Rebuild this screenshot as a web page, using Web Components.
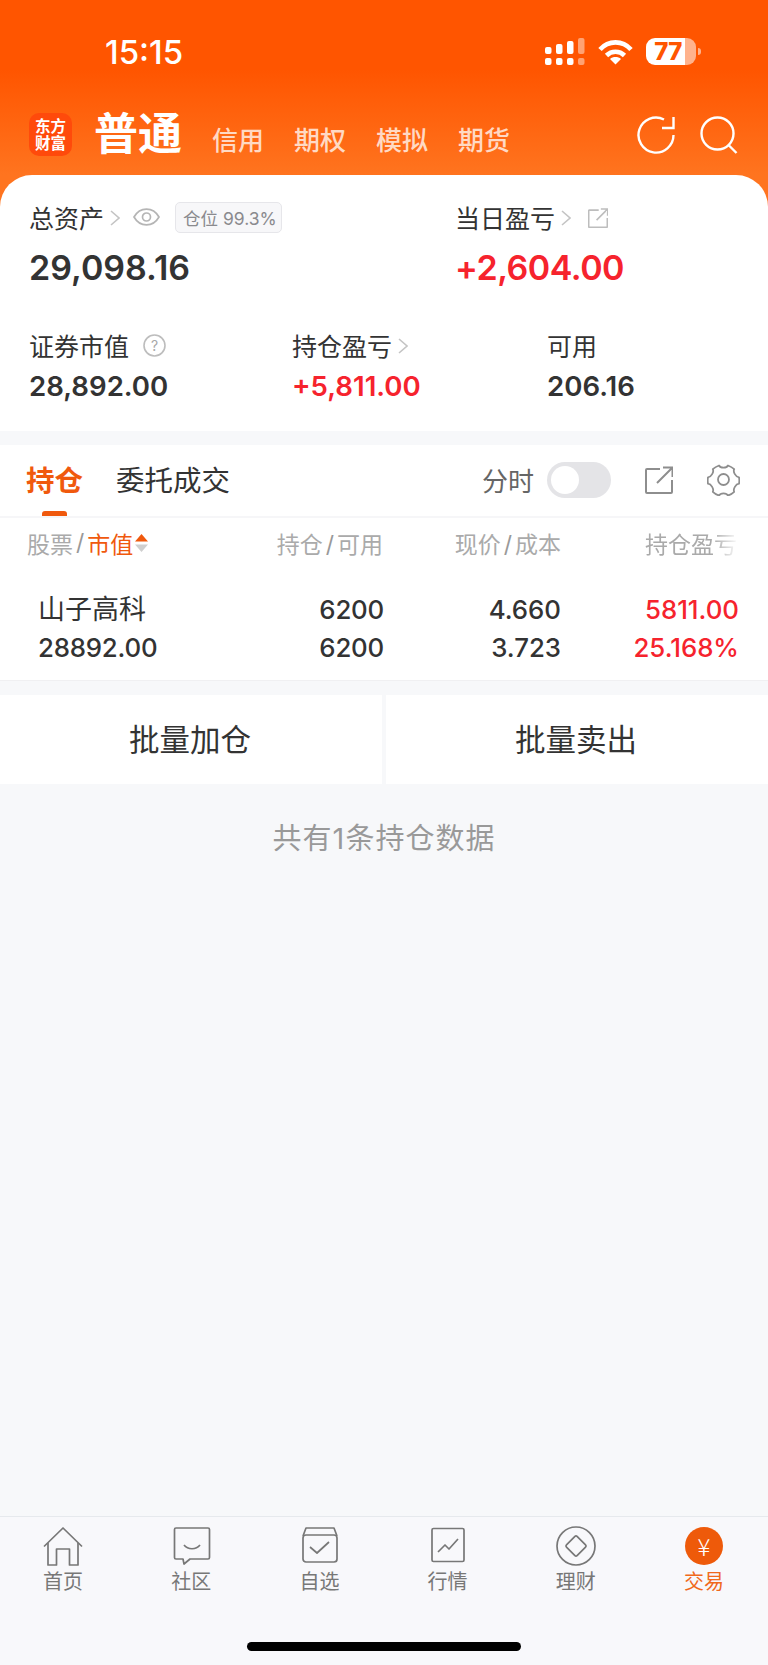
<!DOCTYPE html>
<html lang="zh">
<head>
<meta charset="utf-8">
<title>交易</title>
<style>
    html, body { margin: 0; padding: 0; }
    body {
        width: 768px;
        height: 1665px;
        overflow: hidden;
        display: flex;
        flex-direction: column;
        background: #f7f8fa;
        color: #333;
        font-family: Inter, "Noto Sans CJK SC", sans-serif;
    }
</style>
</head>
<body>
<app-header>
    <asset-card></asset-card>
</app-header>
<position-panel></position-panel>
<bottom-bar></bottom-bar>

<script>
// small shared icons
const CHEVRON = `<svg width="10" height="16" viewBox="0 0 10 16" fill="none" stroke="#c4c4c4" stroke-width="1.6"><path d="M1 1l8 7-8 7"/></svg>`;
const EXT_ICON = (size, color, sw) => `<svg width="${size}" height="${size}" viewBox="0 0 28 28" fill="none" stroke="${color}" stroke-width="${sw}"><path d="M15 3H2a1 1 0 0 0-1 1v22a1 1 0 0 0 1 1h24a1 1 0 0 0 1-1V14"/><path d="M12 17L27 2M18 1.500h9.500V11"/></svg>`;

class StatusBar extends HTMLElement {
    constructor() {
        super();
        this.attachShadow({ mode: 'open' }).innerHTML = `
            <style>
                :host { display: flex; align-items: center; justify-content: space-between; padding: 38px 67px 0 105px; height: 27px; }
                .time { font-size: 33px; font-weight: 500; color: #fff; line-height: 27px; position: relative; top: 1px; }
                .right { display: flex; align-items: center; }
                .wifi { margin-left: 13px; }
                .bat { display: flex; align-items: center; margin-left: 13px; }
                .cell { width: 50px; height: 27px; border-radius: 9px; background: linear-gradient(90deg, #fff 77%, rgba(255,255,255,.55) 77%); color: #ff5500; font-size: 24px; font-weight: 800; line-height: 27px; text-align: center; letter-spacing: -.5px; padding-right: 6px; box-sizing: border-box; }
                .nub { width: 3px; height: 7px; margin-left: 2px; background: rgba(255,255,255,.55); border-radius: 0 3px 3px 0; }
            </style>
            <span class="time">15:15</span>
            <div class="right">
                <svg width="40" height="27" viewBox="0 0 40 27" fill="#fff">
                    <rect x="0" y="20" width="6.500" height="7" rx="2"/><rect x="0" y="9" width="6.500" height="7" rx="2"/>
                    <rect x="11" y="20" width="6.500" height="7" rx="2"/><rect x="11" y="6" width="6.500" height="10" rx="2"/>
                    <rect x="22" y="20" width="6.500" height="7" rx="2"/><rect x="22" y="3" width="6.500" height="13" rx="2"/>
                    <g opacity=".45"><rect x="33" y="20" width="6.500" height="7" rx="2"/><rect x="33" y="0" width="6.500" height="16" rx="2"/></g>
                </svg>
                <svg class="wifi" width="35" height="26" viewBox="0 0 35 26" fill="none" stroke="#fff" stroke-width="4.600">
                    <path d="M2 10.500C10.500 1 24.500 1 33 10.500"/>
                    <path d="M8.500 16.500c5-5 13-5 18 0"/>
                    <path d="M17.500 25.500l-5.500-5.500c3-2.600 8-2.600 11 0z" fill="#fff" stroke="none"/>
                </svg>
                <div class="bat"><div class="cell">77</div><div class="nub"></div></div>
            </div>
        `;
    }
}

class TopNav extends HTMLElement {
    constructor() {
        super();
        const items = ['信用', '期权', '模拟', '期货'];
        this.attachShadow({ mode: 'open' }).innerHTML = `
            <style>
                :host { display: flex; align-items: flex-end; height: 43px; margin-top: 48px; padding: 0 30px 19px 29px; }
                .logo { width: 43px; height: 43px; border-radius: 10px; background: #ff4a0b; color: #fff; font: 700 15.500px/17px "Liberation Serif", "Noto Sans CJK SC", serif; display: flex; align-items: center; justify-content: center; text-align: center; }
                .main { margin-left: 22px; font-size: 44px; font-weight: 700; line-height: 43px; color: #fff; }
                .tabs { display: flex; gap: 30px; margin-left: 30px; }
                .tabs span { font-size: 26px; font-weight: 500; line-height: 30px; color: rgba(255,255,255,.76); display: block; }
                .icons { margin-left: auto; display: flex; gap: 25px; align-self: center; }
            </style>
            <div class="logo"><div>东方<br>财富</div></div>
            <div class="main">普通</div>
            <div class="tabs">${items.map((t) => `<span>${t}</span>`).join('')}</div>
            <div class="icons">
                <svg width="38" height="38" viewBox="0 0 38 38" fill="none" stroke="#fff" stroke-width="2.400">
                    <path d="M36.500 19A17.500 17.500 0 1 1 27 3.500"/>
                    <path d="M25 12h11.500V1"/>
                </svg>
                <svg width="38" height="38" viewBox="0 0 38 38" fill="none" stroke="#fff" stroke-width="2.400">
                    <circle cx="17.500" cy="17.500" r="16"/>
                    <path d="M28.500 29l8 8"/>
                </svg>
            </div>
        `;
    }
}

class AppHeader extends HTMLElement {
    constructor() {
        super();
        this.attachShadow({ mode: 'open' }).innerHTML = `
            <style>
                :host { display: block; background: linear-gradient(#ff5500 0, #ff5500 70px, #ff741f 175px, #ff741f 100%); }
            </style>
            <status-bar></status-bar>
            <top-nav></top-nav>
            <slot></slot>
        `;
    }
}

// label + value pair on the asset card, extras go into the default slot
class MetricCell extends HTMLElement {
    constructor() {
        super();
        const big = this.hasAttribute('big');
        const red = this.hasAttribute('red');
        this.attachShadow({ mode: 'open' }).innerHTML = `
            <style>
                :host { display: block; }
                .label { display: flex; align-items: center; height: 30px; font-size: 25px; color: #333; }
                ::slotted(*) { flex: none; }
                .value { font-weight: 600; color: ${red ? '#f6232d' : '#333'}; font-size: ${big ? 34 : 27.6}px; line-height: ${big ? 40 : 34}px; margin-top: ${big ? 16 : 9}px; white-space: nowrap; letter-spacing: ${big && red ? '-.5px' : '0'}; }
            </style>
            <div class="label"><span>${this.getAttribute('label')}</span><slot></slot></div>
            <div class="value">${this.getAttribute('value')}</div>
        `;
    }
}

class AssetCard extends HTMLElement {
    constructor() {
        super();
        this.attachShadow({ mode: 'open' }).innerHTML = `
            <style>
                :host { display: block; height: 256px; box-sizing: border-box; padding: 27px 0 0 29px; background: #fff; border-radius: 32px 32px 0 0; }
                .row { display: grid; }
                .top { grid-template-columns: 426px 1fr; }
                .bottom { grid-template-columns: 263px 255px 1fr; margin-top: 42px; }
                .chev { margin-left: 6px; }
                .eye { margin-left: 13px; }
                .badge { margin-left: 15px; margin-top: 1px; height: 31px; box-sizing: border-box; padding: 0 4px 0 7px; display: flex; align-items: center; border: 1px solid #e6e6ea; border-radius: 5px; background: #f7f7f9; color: #8a8a8e; font-size: 17.500px; white-space: nowrap; }
                .ext { margin-left: 17px; margin-top: 3px; }
                .help { margin-left: 14px; }
            </style>
            <div class="row top">
                <metric-cell big label="总资产" value="29,098.16">
                    <span class="chev">${CHEVRON}</span>
                    <svg class="eye" width="27" height="18" viewBox="0 0 27 18" fill="none" stroke="#b5b5b5" stroke-width="1.700"><path d="M1 9c6-10.500 19-10.500 25 0-6 10.500-19 10.500-25 0z"/><circle cx="13.500" cy="9" r="4"/></svg>
                    <span class="badge">仓位 99.3%</span>
                </metric-cell>
                <metric-cell big red label="当日盈亏" value="+2,604.00">
                    <span class="chev">${CHEVRON}</span>
                    <span class="ext">${EXT_ICON(20, '#bdbdbd', 2.200)}</span>
                </metric-cell>
            </div>
            <div class="row bottom">
                <metric-cell label="证券市值" value="28,892.00">
                    <svg class="help" width="23" height="23" viewBox="0 0 23 23"><circle cx="11.500" cy="11.500" r="10.500" fill="none" stroke="#bdbdbd" stroke-width="1.600"/><text x="11.500" y="16.500" text-anchor="middle" font-size="14" font-family="Inter" fill="#a8a8a8">?</text></svg>
                </metric-cell>
                <metric-cell red label="持仓盈亏" value="+5,811.00">
                    <span class="chev">${CHEVRON}</span>
                </metric-cell>
                <metric-cell label="可用" value="206.16"></metric-cell>
            </div>
        `;
    }
}

class PositionPanel extends HTMLElement {
    constructor() {
        super();
        this.attachShadow({ mode: 'open' }).innerHTML = `
            <style>
                :host { display: flex; flex-direction: column; flex: 1; min-height: 0; background: #f7f8fa; padding-top: 14px; }
                .tabs { background: #fff; display: flex; align-items: center; padding: 0 28px 2px 26px; box-sizing: border-box; border-bottom: 2px solid #f6f6f8; height: 73px; }
                .tab { font-size: 28.500px; line-height: 40px; color: #333; margin-top: 3px; }
                .tab.on { color: #f0590d; font-weight: 700; position: relative; margin-right: 33px; }
                .tab.on::after { content: ""; position: absolute; left: 16px; bottom: -15px; width: 25px; height: 5px; border-radius: 3px 3px 0 0; background: #f0590d; }
                .tools { margin-left: auto; display: flex; align-items: center; }
                .mode { font-size: 26px; color: #666; }
                .toggle { width: 64px; height: 36px; margin-left: 13px; box-sizing: border-box; padding: 4px; border-radius: 18px; background: #e4e4e7; }
                .toggle i { display: block; width: 28px; height: 28px; border-radius: 50%; background: #fff; }
                .ext { margin-left: 34px; display: flex; }
                .gear { margin-left: 34px; display: flex; }
                .grid { display: grid; grid-template-columns: 1fr 131px 178px 178px; padding-right: 29px; background: #fff; }
                .head { height: 54px; box-sizing: border-box; padding-bottom: 4px; align-items: center; font-size: 23px; color: #aaa; white-space: nowrap; }
                .head > div { text-align: right; }
                .head .first { text-align: left; padding-left: 27px; display: flex; align-items: center; }
                .head b { font-weight: 400; color: #f0590d; }
                .sl { font-size: 23px; margin: 0 3px; color: #999; }
                .fade { -webkit-mask-image: linear-gradient(90deg, #000 72%, transparent 100%); mask-image: linear-gradient(90deg, #000 72%, transparent 100%); margin-left: 84px; text-align: left !important; letter-spacing: 0; }
                .sort { margin-left: 1px; }
                .data { height: 109px; box-sizing: border-box; border-bottom: 1px solid #f0f0f2; padding-top: 6px; align-content: center; row-gap: 4px; font-size: 25.800px; font-weight: 500; line-height: 34px; }
                .data > div { text-align: right; }
                .data .first { text-align: left; padding-left: 38px; letter-spacing: -.2px; }
                .data .name { font-weight: 400; font-size: 27px; letter-spacing: 0; }
                .data .qty { margin-right: -1px; letter-spacing: -.2px; }
                .data .up { color: #f6232d; }
                .batch { margin-top: 14px; height: 89px; display: flex; gap: 4px; }
                .batch div { flex: 1; background: #fff; display: flex; align-items: center; justify-content: center; font-size: 30.500px; color: #333; padding: 0 2px 3px 0; box-sizing: border-box; }
                .count { margin-top: 35px; text-align: center; font-size: 29px; letter-spacing: 1px; line-height: 40px; color: #999; }
            </style>
            <div class="tabs">
                <span class="tab on">持仓</span>
                <span class="tab">委托成交</span>
                <div class="tools">
                    <span class="mode">分时</span>
                    <div class="toggle"><i></i></div>
                    <span class="ext">${EXT_ICON(28, '#8e8e8e', 2)}</span>
                    <span class="gear">
                        <svg width="33" height="33" viewBox="0 0 33 33" fill="none" stroke="#8e8e8e" stroke-width="1.800" stroke-linejoin="round">
                            <path d="M12 2.500c1.500 2.800 7.500 2.800 9 0 2.300.8 4.400 2 6.200 3.700-1.400 2.700 1.500 7.800 4.800 8.100.5 2.400.5 4 0 6.400-3.300.3-6.200 5.400-4.800 8.100-1.800 1.700-3.900 2.900-6.200 3.700-1.500-2.800-7.500-2.800-9 0-2.300-.8-4.400-2-6.200-3.700 1.400-2.700-1.500-7.800-4.800-8.100-.5-2.400-.5-4 0-6.400 3.300-.3 6.200-5.400 4.800-8.100 1.800-1.700 3.900-2.900 6.200-3.700z"/>
                            <circle cx="16.500" cy="16.500" r="5.500"/>
                        </svg>
                    </span>
                </div>
            </div>
            <div class="grid head">
                <div class="first">股票<span class="sl">/</span><b>市值</b>
                    <svg class="sort" width="15" height="20" viewBox="0 0 15 20"><path d="M7.500 1l6.500 7.500H1z" fill="#f0590d"/><path d="M7.500 19L1 11.500h13z" fill="#cfcfcf"/></svg>
                </div>
                <div>持仓<span class="sl">/</span>可用</div>
                <div>现价<span class="sl">/</span>成本</div>
                <div class="fade">持仓盈亏</div>
            </div>
            <div class="grid data">
                <div class="first name">山子高科</div><div class="qty">6200</div><div>4.660</div><div class="up">5811.00</div>
                <div class="first">28892.00</div><div class="qty">6200</div><div>3.723</div><div class="up">25.168%</div>
            </div>
            <div class="batch"><div>批量加仓</div><div>批量卖出</div></div>
            <div class="count">共有1条持仓数据</div>
        `;
    }
}

class BottomBar extends HTMLElement {
    constructor() {
        super();
        const svg = (d) => `<svg width="40" height="40" viewBox="0 0 40 40" fill="none" stroke="#777" stroke-width="1.700" stroke-linejoin="round">${d}</svg>`;
        const items = [
            ['首页', svg('<g transform="translate(1 0)"><path d="M0 20.500L19 2l19 18.500"/><path d="M4 17v22h8.500V23h13v16H34V17"/></g>')],
            ['社区', svg('<g transform="translate(1 0)"><path d="M4 2h32a1.500 1.500 0 0 1 1.500 1.500v28a1.500 1.500 0 0 1-1.500 1.500H18l-6 5-1-5H4a1.500 1.500 0 0 1-1.500-1.500v-28A1.500 1.500 0 0 1 4 2z"/><path d="M12 19c4 5 12 5 16 0"/></g>')],
            ['自选', svg('<g transform="translate(1 0)"><path d="M3 10l3-8h28l3 8"/><rect x="3" y="9" width="34" height="27" rx="3"/><path d="M10 21l7 6 12-11"/></g>')],
            ['行情', svg('<rect x="4" y="2.500" width="32" height="33" rx="1.500"/><path d="M10 26l7-7 4 4 9-10"/>')],
            ['理财', svg('<circle cx="20" cy="20" r="19"/><rect x="12.500" y="12.500" width="15" height="15" rx="1.500" transform="rotate(45 20 20)"/>')],
            ['交易', `<span class="yen">¥</span>`]
        ];
        this.attachShadow({ mode: 'open' }).innerHTML = `
            <style>
                :host { display: block; height: 149px; box-sizing: border-box; background: #f8f8fb; border-top: 1px solid #e6e9ed; }
                .items { display: grid; grid-template-columns: repeat(6, 1fr); padding-top: 9px; margin-left: -1px; }
                .item { display: flex; flex-direction: column; align-items: center; color: #777; font-size: 20px; line-height: 24px; gap: 4px; }
                .item.on { color: #f0691c; }
                .item svg, .yen { display: block; width: 40px; height: 40px; }
                .yen { width: 38px; height: 38px; margin: 1px; border-radius: 50%; background: #ee5a0a; color: #fff; font-family: "Noto Sans CJK SC", sans-serif; font-weight: 300; font-size: 24px; line-height: 38px; text-align: center; }
                .home { width: 274px; height: 9px; margin: 48px auto 0; border-radius: 5px; background: #000; }
            </style>
            <div class="items">
                ${items.map(([name, icon], i) => `
                    <div class="item ${i === 5 ? 'on' : ''}">${icon}<span>${name}</span></div>
                `).join('')}
            </div>
            <div class="home"></div>
        `;
    }
}

customElements.define('status-bar', StatusBar);
customElements.define('top-nav', TopNav);
customElements.define('app-header', AppHeader);
customElements.define('metric-cell', MetricCell);
customElements.define('asset-card', AssetCard);
customElements.define('position-panel', PositionPanel);
customElements.define('bottom-bar', BottomBar);
</script>
</body>
</html>
